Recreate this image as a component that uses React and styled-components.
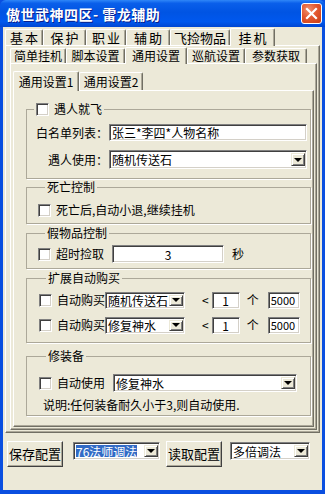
import React from 'react';
import styled, { createGlobalStyle } from 'styled-components';

const GlobalStyle = createGlobalStyle`
  html, body {
    margin: 0;
    padding: 0;
    background: #ECE9D8;
  }
  body {
    font-family: "Noto Sans CJK SC", "Liberation Sans", sans-serif;
    font-size: 12px;
    line-height: 14px;
    color: #000;
  }
  * { box-sizing: border-box; }
`;

const Styles = {
  Window: styled.div`
    width: 325px;
    height: 494px;
    display: flex;
    flex-direction: column;
    background: #0A4FE0;
  `,
  TitleBar: styled.div`
    height: 27px;
    flex: none;
    display: flex;
    align-items: center;
    justify-content: space-between;
    padding: 0 3px 0 6px;
    background: linear-gradient(to bottom, #2F87F8 0%, #0A5FEA 12%, #0054E3 45%, #0058EE 80%, #0046D2 100%);
    border-radius: 6px 6px 0 0;
  `,
  Title: styled.div`
    color: #fff;
    font-size: 14px;
    font-weight: bold;
    letter-spacing: 0.5px;
    text-shadow: 1px 1px 0 #0A1E8C;
  `,
  Close: styled.div`
    width: 21px;
    height: 21px;
    border: 1px solid #fff;
    border-radius: 3px;
    background: radial-gradient(circle at 35% 30%, #F0906E 0%, #E3582F 45%, #C83D14 100%);
    display: flex;
    align-items: center;
    justify-content: center;
  `,
  Body: styled.div`
    flex: 1;
    display: flex;
    flex-direction: column;
    background: #ECE9D8;
    margin: 0 3px 4px 3px;
    padding: 0 2px;
  `,
  TabStrip: styled.div`
    display: flex;
    align-items: flex-end;
    height: ${p => p.$h}px;
    flex: none;
    position: relative;
    z-index: 1;
  `,
  Tab: styled.div`
    width: ${p => p.$w}px;
    height: ${p => (p.$active ? p.$h : p.$h - 2)}px;
    margin-bottom: ${p => (p.$active ? -1 : 0)}px;
    border-top: 1px solid #fff;
    border-left: 1px solid #fff;
    border-right: 1px solid #716F64;
    box-shadow: inset -1px 0 0 #ACA899;
    border-radius: 2px 2px 0 0;
    background: #ECE9D8;
    display: flex;
    align-items: center;
    justify-content: center;
    font-size: ${p => p.$fs || 12}px;
    letter-spacing: ${p => p.$ls || 0}px;
    text-indent: ${p => p.$ls || 0}px;
    line-height: 14px;
    white-space: nowrap;
  `,
  Panel: styled.div`
    height: ${p => p.$h}px;
    flex: none;
    display: flex;
    flex-direction: column;
    border-top: 1px solid #fff;
    border-left: 1px solid #fff;
    border-right: 1px solid #716F64;
    border-bottom: 1px solid #716F64;
    box-shadow: inset -1px -1px 0 #ACA899;
    padding: ${p => p.$pad};
  `,
  Group: styled.fieldset`
    margin: ${p => p.$mt || 0}px 0 0 0;
    padding: ${p => p.$pad};
    border: 1px solid #ACA899;
    box-shadow: 1px 1px 0 #fff;
    display: flex;
    flex-direction: column;
    gap: ${p => p.$gap || 0}px;
    min-width: 0;
  `,
  Legend: styled.legend`
    margin-left: 7px;
    padding: 0 2px;
    height: 14px;
    line-height: 14px;
    display: flex;
    align-items: center;
    gap: 5px;
    white-space: nowrap;
  `,
  Row: styled.div`
    display: flex;
    align-items: center;
    height: ${p => p.$h || 16}px;
    padding-left: ${p => p.$indent || 0}px;
    white-space: nowrap;
  `,
  Label: styled.span`
    width: ${p => (p.$w ? p.$w + 'px' : 'auto')};
    text-align: ${p => p.$align || 'left'};
    margin-left: ${p => p.$ml || 0}px;
    margin-right: ${p => p.$mr || 0}px;
    flex: none;
  `,
  Check: styled.span`
    width: 13px;
    height: 13px;
    flex: none;
    background: #fff;
    border-top: 1px solid #808080;
    border-left: 1px solid #808080;
    border-bottom: 1px solid #fff;
    border-right: 1px solid #fff;
    box-shadow: inset 1px 1px 0 #404040, inset -1px -1px 0 #D4D0C8;
    margin-right: ${p => p.$mr || 0}px;
  `,
  Field: styled.div`
    width: ${p => p.$w}px;
    height: ${p => p.$h || 17}px;
    flex: none;
    background: #fff;
    border-top: 1px solid #808080;
    border-left: 1px solid #808080;
    border-bottom: 1px solid #fff;
    border-right: 1px solid #fff;
    box-shadow: inset 1px 1px 0 #404040, inset -1px -1px 0 #D4D0C8;
    display: flex;
    align-items: center;
    justify-content: ${p => (p.$center ? 'center' : 'flex-start')};
    padding: 0 2px;
    font-size: ${p => p.$fs || 12}px;
    line-height: 13px;
    margin-left: ${p => p.$ml || 0}px;
    white-space: nowrap;
  `,
  Combo: styled.div`
    width: ${p => p.$w}px;
    height: ${p => p.$h || 18}px;
    flex: none;
    background: #fff;
    border-top: 1px solid #808080;
    border-left: 1px solid #808080;
    border-bottom: 1px solid #fff;
    border-right: 1px solid #fff;
    box-shadow: inset 1px 1px 0 #404040, inset -1px -1px 0 #D4D0C8;
    display: flex;
    align-items: center;
    padding: 2px 1px 2px 2px;
    margin-left: ${p => p.$ml || 0}px;
  `,
  ComboText: styled.span`
    flex: 1;
    min-width: 0;
    white-space: nowrap;
    display: flex;
    align-items: center;
    height: 100%;
    line-height: 13px;
  `,
  Highlight: styled.span`
    background: #316AC5;
    color: #fff;
    height: 100%;
    display: flex;
    align-items: center;
  `,
  Arrow: styled.span`
    width: 14px;
    height: 100%;
    flex: none;
    background: #ECE9D8;
    border-top: 1px solid #ECE9D8;
    border-left: 1px solid #ECE9D8;
    border-right: 1px solid #404040;
    border-bottom: 1px solid #404040;
    box-shadow: inset 1px 1px 0 #fff, inset -1px -1px 0 #808080;
    display: flex;
    align-items: center;
    justify-content: center;
    &::after {
      content: '';
      border-left: 4px solid transparent;
      border-right: 4px solid transparent;
      border-top: 4px solid #000;
    }
  `,
  Groups: styled.div`
    display: flex;
    flex-direction: column;
  `,
  BottomBar: styled.div`
    display: flex;
    align-items: flex-start;
    padding: 8px 0 0 2px;
  `,
  Button: styled.div`
    width: 56px;
    height: 26px;
    flex: none;
    background: #ECE9D8;
    border-top: 1px solid #fff;
    border-left: 1px solid #fff;
    border-right: 1px solid #404040;
    border-bottom: 1px solid #404040;
    box-shadow: inset -1px -1px 0 #ACA899;
    display: flex;
    align-items: center;
    justify-content: center;
    font-size: 13px;
    margin-left: ${p => p.$ml || 0}px;
    white-space: nowrap;
  `,
  BarCombo: styled.div`
    margin-top: 1px;
    margin-left: ${p => p.$ml || 0}px;
  `,
};

const Combo = ({ w, h, ml, children, selected }) => (
  <Styles.Combo $w={w} $h={h} $ml={ml}>
    <Styles.ComboText>
      {selected ? <Styles.Highlight>{children}</Styles.Highlight> : children}
    </Styles.ComboText>
    <Styles.Arrow />
  </Styles.Combo>
);

const outerTabs = [
  { t: '基本', w: 38 },
  { t: '保护', w: 43 },
  { t: '职业', w: 40 },
  { t: '辅助', w: 44 },
  { t: '飞捡物品', w: 60, ls: 0 },
  { t: '挂机', w: 45, active: true },
];

const innerTabs = [
  { t: '简单挂机', w: 56 },
  { t: '脚本设置', w: 59 },
  { t: '通用设置', w: 62, active: true },
  { t: '巡航设置', w: 58 },
  { t: '参数获取', w: 62 },
];

const pageTabs = [
  { t: '通用设置1', w: 66, active: true },
  { t: '通用设置2', w: 64 },
];

const App = () => {
  return (
    <Styles.Window>
      <GlobalStyle />
      <Styles.TitleBar>
        <Styles.Title>傲世武神四区- 雷龙辅助</Styles.Title>
        <Styles.Close>
          <svg width="13" height="13" viewBox="0 0 13 13">
            <path d="M2 2 L11 11 M11 2 L2 11" stroke="#fff" strokeWidth="2.2" strokeLinecap="square" />
          </svg>
        </Styles.Close>
      </Styles.TitleBar>
      <Styles.Body>
        <Styles.TabStrip $h={18}>
          {outerTabs.map(tab => (
            <Styles.Tab key={tab.t} $w={tab.w} $h={18} $active={tab.active} $fs={13} $ls={tab.ls ?? 2}>
              {tab.t}
            </Styles.Tab>
          ))}
        </Styles.TabStrip>
        <Styles.Panel $h={388} $pad="0 2px 1px 4px">
          <Styles.TabStrip $h={17}>
            {innerTabs.map(tab => (
              <Styles.Tab key={tab.t} $w={tab.w} $h={17} $active={tab.active}>
                {tab.t}
              </Styles.Tab>
            ))}
          </Styles.TabStrip>
          <Styles.Panel $h={367} $pad="6px 2px 2px 2px">
            <Styles.TabStrip $h={20}>
              {pageTabs.map(tab => (
                <Styles.Tab key={tab.t} $w={tab.w} $h={20} $active={tab.active}>
                  {tab.t}
                </Styles.Tab>
              ))}
            </Styles.TabStrip>
            <Styles.Panel $h={337} $pad="11px 2px 0 12px">
              <Styles.Groups>
                <Styles.Group $pad="8px 3px 9px 0" $gap={9}>
                  <Styles.Legend><Styles.Check />遇人就飞</Styles.Legend>
                  <Styles.Row $h={17}>
                    <Styles.Label $w={81} $align="right" $mr={1}>白名单列表：</Styles.Label>
                    <Styles.Field $w={198}>张三*李四*人物名称</Styles.Field>
                  </Styles.Row>
                  <Styles.Row $h={19}>
                    <Styles.Label $w={81} $align="right" $mr={1}>遇人使用：</Styles.Label>
                    <Combo w={198} h={19}>随机传送石</Combo>
                  </Styles.Row>
                </Styles.Group>

                <Styles.Group $mt={1} $pad="8px 3px 5px 11px">
                  <Styles.Legend>死亡控制</Styles.Legend>
                  <Styles.Row>
                    <Styles.Check $mr={5} />
                    死亡后,自动小退,继续挂机
                  </Styles.Row>
                </Styles.Group>

                <Styles.Group $mt={2} $pad="5px 3px 5px 11px">
                  <Styles.Legend>假物品控制</Styles.Legend>
                  <Styles.Row $h={18}>
                    <Styles.Check $mr={5} />
                    <Styles.Label $w={56}>超时捡取</Styles.Label>
                    <Styles.Field $w={112} $h={18} $center>3</Styles.Field>
                    <Styles.Label $ml={8}>秒</Styles.Label>
                  </Styles.Row>
                </Styles.Group>

                <Styles.Group $mt={2} $pad="7px 3px 9px 12px" $gap={9}>
                  <Styles.Legend>扩展自动购买</Styles.Legend>
                  <Styles.Row>
                    <Styles.Check $mr={5} />
                    <Styles.Label $w={48}>自动购买</Styles.Label>
                    <Combo w={80} h={17}>随机传送石</Combo>
                    <Styles.Label $ml={17}>&lt;</Styles.Label>
                    <Styles.Field $w={28} $h={17} $ml={3} $center>1</Styles.Field>
                    <Styles.Label $ml={7} $mr={9}>个</Styles.Label>
                    <Styles.Field $w={32} $h={17} $fs={11}>5000</Styles.Field>
                  </Styles.Row>
                  <Styles.Row>
                    <Styles.Check $mr={5} />
                    <Styles.Label $w={48}>自动购买</Styles.Label>
                    <Combo w={80} h={17}>修复神水</Combo>
                    <Styles.Label $ml={17}>&lt;</Styles.Label>
                    <Styles.Field $w={28} $h={17} $ml={3} $center>1</Styles.Field>
                    <Styles.Label $ml={7} $mr={9}>个</Styles.Label>
                    <Styles.Field $w={32} $h={17} $fs={11}>5000</Styles.Field>
                  </Styles.Row>
                </Styles.Group>

                <Styles.Group $mt={6} $pad="11px 3px 3px 12px" $gap={6}>
                  <Styles.Legend>修装备</Styles.Legend>
                  <Styles.Row $h={18}>
                    <Styles.Check $mr={5} />
                    <Styles.Label $w={56}>自动使用</Styles.Label>
                    <Combo w={184} h={18}>修复神水</Combo>
                  </Styles.Row>
                  <Styles.Row $h={14} $indent={4}>
                    说明:任何装备耐久小于3,则自动使用.
                  </Styles.Row>
                </Styles.Group>
              </Styles.Groups>
            </Styles.Panel>
          </Styles.Panel>
        </Styles.Panel>
        <Styles.BottomBar>
          <Styles.Button>保存配置</Styles.Button>
          <Styles.BarCombo $ml={10}>
            <Combo w={87} h={18} selected>76法师调法</Combo>
          </Styles.BarCombo>
          <Styles.Button $ml={6}>读取配置</Styles.Button>
          <Styles.BarCombo $ml={8}>
            <Combo w={80} h={18}>多倍调法</Combo>
          </Styles.BarCombo>
        </Styles.BottomBar>
      </Styles.Body>
    </Styles.Window>
  );
};

export default App;
